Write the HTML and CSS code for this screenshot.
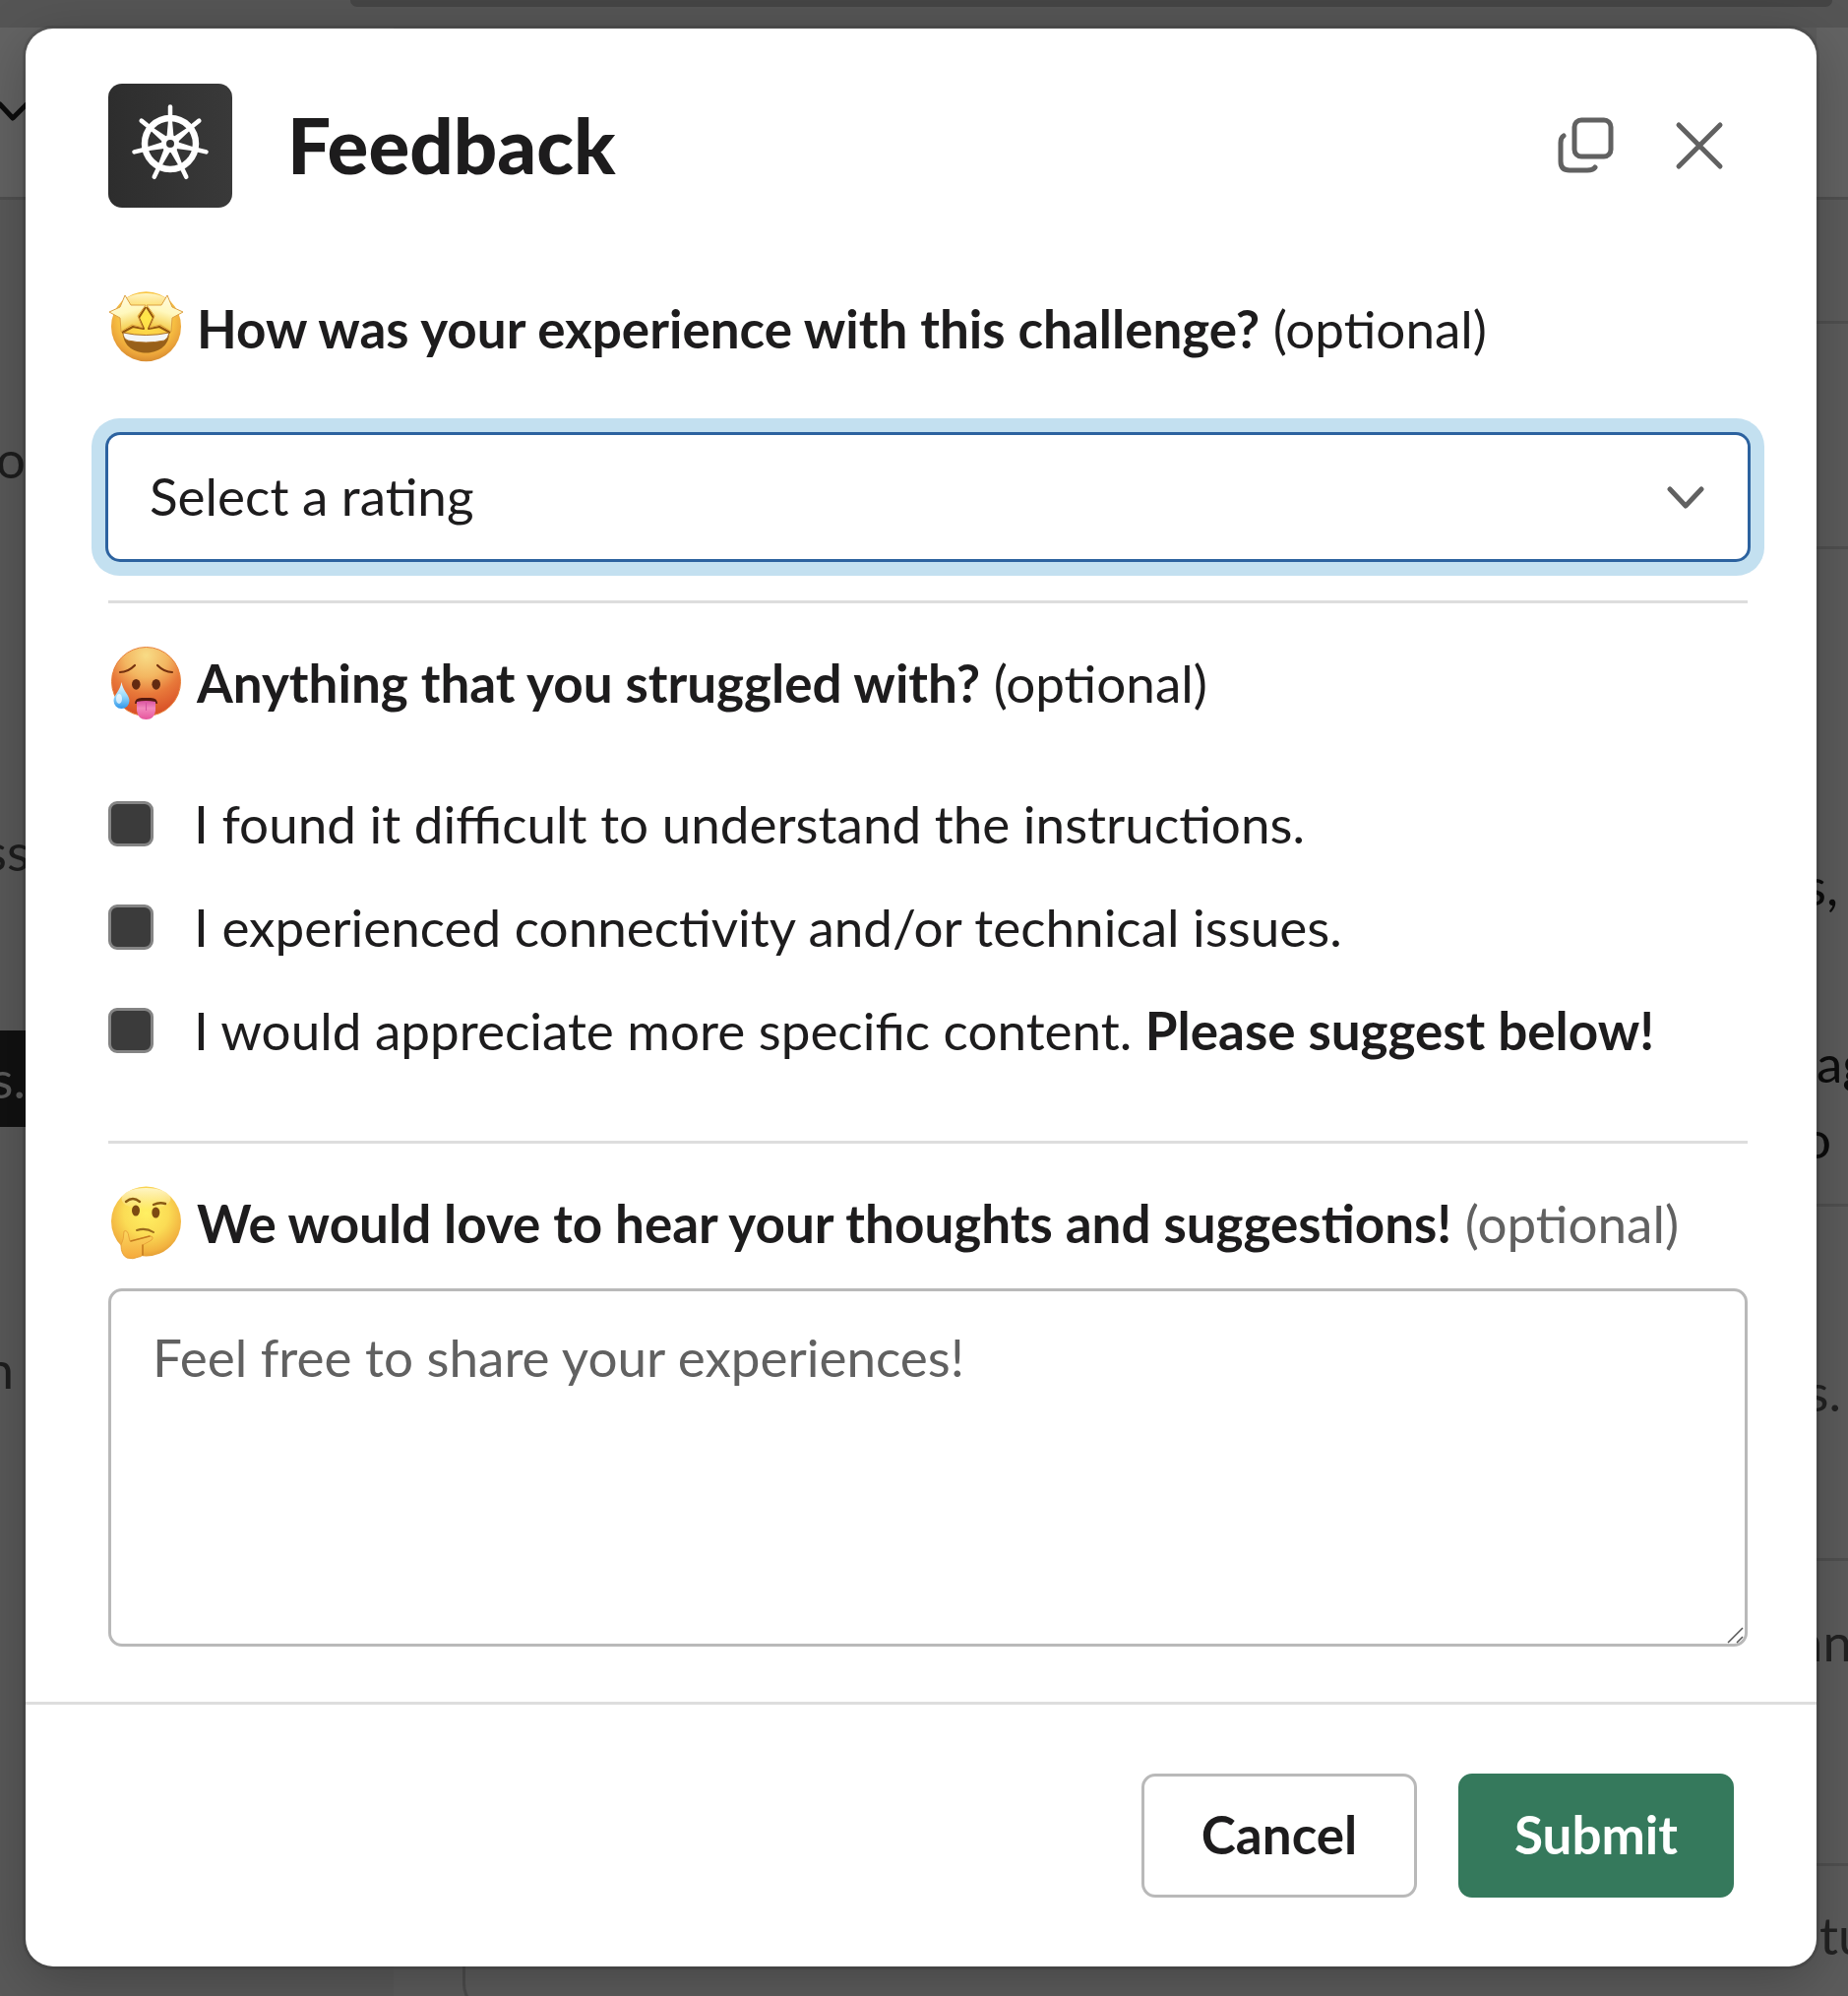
FILE: index.html
```html
<!DOCTYPE html>
<html lang="en">
<head>
<meta charset="utf-8">
<title>Feedback</title>
<meta name="viewport" content="width=device-width, initial-scale=1">
<link rel="stylesheet" href="styles.css">
</head>
<body>
<div class="workspace" aria-hidden="true">
  <div class="topbar"><div class="searchbar"></div></div>
  <div class="panes">
    <div class="sidebar">
      <div class="pane-head">
        <svg class="head-chevron" width="26" height="24" viewBox="0 0 26 24"><path d="M0 4 L13 18 L27 4" fill="none" stroke="#0c0c0c" stroke-width="5" stroke-linecap="round" stroke-linejoin="round"/></svg>
      </div>
      <div class="sidebar-list">
        <p class="peek peek-first">o</p>
        <p class="peek peek-second">ss</p>
        <p class="peek peek-active">s.</p>
        <p class="peek peek-last">n</p>
      </div>
    </div>
    <div class="main">
      <div class="channel"><div class="composer"></div></div>
      <div class="details">
        <div class="pane-head"></div>
        <div class="section section-tabs"></div>
        <div class="section section-title"></div>
        <div class="section section-about"><p class="peek">s,</p><p class="peek peek-start">ag</p><p class="peek peek-o">o</p></div>
        <div class="section section-tips"><p class="peek muted peek-dot">s.</p></div>
        <div class="section section-more"><p class="peek muted peek-edge">an</p></div>
        <div class="section section-end"><p class="peek muted peek-start">tu</p></div>
      </div>
    </div>
  </div>
</div>

<form class="modal" role="dialog" aria-labelledby="dialog-title">
  <header class="modal-header">
    <svg class="app-logo" viewBox="0 0 126 126" aria-hidden="true">
      <defs>
        <linearGradient id="tile"><stop offset="0" stop-color="#2d2d2d"/><stop offset="1" stop-color="#393939"/></linearGradient>
        <g id="spoke"><path d="M61.2 35 L59.500 54 H66.500 L64.8 35 Z" fill="#fff"/><path d="M63 36 V23.500" stroke="#fff" stroke-width="4.500" stroke-linecap="round"/></g>
      </defs>
      <rect width="126" height="126" rx="14" fill="url(#tile)"/>
      <circle cx="63" cy="61" r="26" fill="none" stroke="#fff" stroke-width="6.500"/>
      <use href="#spoke"/>
      <use href="#spoke" transform="rotate(51.43 63 61)"/>
      <use href="#spoke" transform="rotate(102.86 63 61)"/>
      <use href="#spoke" transform="rotate(154.29 63 61)"/>
      <use href="#spoke" transform="rotate(205.71 63 61)"/>
      <use href="#spoke" transform="rotate(257.14 63 61)"/>
      <use href="#spoke" transform="rotate(308.57 63 61)"/>
      <circle cx="63" cy="61" r="6.500" fill="#333" stroke="#fff" stroke-width="5"/>
    </svg>
    <h1 class="title" id="dialog-title">Feedback</h1>
    <div class="window-actions">
      <button class="icon-button" type="button" aria-label="Open in new window">
        <svg width="70" height="70" viewBox="0 0 70 70" fill="none" stroke="#616161" stroke-width="5" stroke-linecap="round"><rect x="23" y="9" width="37" height="37" rx="7"/><path d="M12 25 Q9 27 9 32 V51 Q9 60 18 60 H36 Q42 60 44 57"/></svg>
      </button>
      <button class="icon-button" type="button" aria-label="Close">
        <svg width="70" height="70" viewBox="0 0 70 70" fill="none" stroke="#616161" stroke-width="5" stroke-linecap="round"><path d="M14 14 L56 56 M56 14 L14 56"/></svg>
      </button>
    </div>
  </header>

  <div class="modal-body">
    <section class="question">
      <label class="prompt" for="rating">
        <svg class="emoji" viewBox="0 0 77 77" aria-hidden="true">
          <defs>
            <radialGradient id="starFace" cx=".5" cy=".38" r=".63"><stop offset="0" stop-color="#ffe84a"/><stop offset=".55" stop-color="#fbca45"/><stop offset=".85" stop-color="#eba43a"/><stop offset="1" stop-color="#d68a30"/></radialGradient>
            <linearGradient id="shine" x2="0" y2="1"><stop offset="0" stop-color="#fff6c5"/><stop offset="1" stop-color="#fff6c5" stop-opacity="0"/></linearGradient>
            <linearGradient id="star" x1=".4" x2=".7" y2="1"><stop offset="0" stop-color="#fffbe0"/><stop offset=".45" stop-color="#fff8bd"/><stop offset="1" stop-color="#f2c22e"/></linearGradient>
          </defs>
          <circle cx="38.500" cy="36.700" r="35.500" fill="url(#starFace)"/>
          <ellipse cx="38.500" cy="13" rx="23" ry="10" fill="url(#shine)"/>
          <g fill="url(#star)" stroke-linejoin="round">
            <g id="starEye">
              <path d="M38 17 L31 28 L36 39 L25 37 L14 43" fill="none" stroke="#91540e" stroke-width="2"/>
              <path d="M17 5 L23 15 L38 15 L30 26 L35 38 L24 35 L13 42 L12 28 L1 22 L12 17 Z" stroke="#dda043" stroke-width="1"/>
            </g>
            <use href="#starEye" transform="translate(77 0) scale(-1 1)"/>
          </g>
          <path d="M15 44 C16 70 61 70 62 44 Q38 50 15 44 Z" fill="#986019"/>
          <path d="M15 43 Q38 48 62 43 Q61 49 57 51 Q38 55 20 51 Q15 49 15 43 Z" fill="#f4f5f7" stroke="#a96e25" stroke-width="1"/>
        </svg>
        <span class="prompt-text"><strong>How was your experience with this challenge?</strong> (optional)</span>
      </label>
      <div class="select-wrap">
        <select class="select" id="rating"><option>Select a rating</option></select>
        <svg class="select-chevron" width="42" height="42" viewBox="0 0 42 42" aria-hidden="true"><path d="M5 13 L21 30 L37 13" fill="none" stroke="#616161" stroke-width="5" stroke-linecap="round" stroke-linejoin="round"/></svg>
      </div>
    </section>

    <hr class="divider">

    <fieldset class="question struggles">
      <legend class="prompt">
        <svg class="emoji" viewBox="0 0 77 77" aria-hidden="true">
          <defs>
            <radialGradient id="hotFace" cx=".5" cy=".12" r=".9"><stop offset="0" stop-color="#f8dc86"/><stop offset=".35" stop-color="#f3b661"/><stop offset=".62" stop-color="#e8793a"/><stop offset="1" stop-color="#d64a24"/></radialGradient>
            <linearGradient id="drop" x2="0" y2="1"><stop offset="0" stop-color="#eef9ff"/><stop offset=".5" stop-color="#9ddcfa"/><stop offset="1" stop-color="#2f96ea"/></linearGradient>
            <linearGradient id="tongue" x2="0" y2="1"><stop offset="0" stop-color="#d9529f"/><stop offset=".4" stop-color="#f289bd"/><stop offset="1" stop-color="#e6559c"/></linearGradient>
          </defs>
          <circle cx="38.500" cy="37.500" r="35" fill="url(#hotFace)" stroke="#e8813a" stroke-width="1"/>
          <path d="M12 28 Q20 28 27 21 M50 21 Q57 28 65 28" fill="none" stroke="#75310f" stroke-width="2.200" stroke-linecap="round"/>
          <ellipse cx="28.300" cy="40.300" rx="4.300" ry="5.400" fill="#632a11"/><ellipse cx="48.700" cy="40.300" rx="4.300" ry="5.400" fill="#632a11"/>
          <path d="M27 60 Q27 54 34 54 H43 Q50 54 50 60 Q38 57 27 60 Z" fill="#55190e"/>
          <path d="M29 58 Q38 56 48 58 V67 Q47 76 38.500 76 Q30 76 29 67 Z" fill="url(#tongue)"/>
          <path d="M38.500 59 V67" stroke="#d452a0" stroke-width="1"/>
          <path d="M13.500 38 C15 47 21.500 51 21.500 57 A8 8 0 0 1 5.500 57 C5.500 51 12 47 13.500 38 Z" fill="url(#drop)"/>
          <ellipse cx="11" cy="55" rx="3" ry="5" fill="#fff" opacity=".7"/>
        </svg>
        <span class="prompt-text"><strong>Anything that you struggled with?</strong> (optional)</span>
      </legend>
      <div class="options">
        <label class="option"><input class="checkbox" type="checkbox"><span>I found it difficult to understand the instructions.</span></label>
        <label class="option"><input class="checkbox" type="checkbox"><span>I experienced connectivity and/or technical issues.</span></label>
        <label class="option"><input class="checkbox" type="checkbox"><span>I would appreciate more specific content. <strong>Please suggest below!</strong></span></label>
      </div>
    </fieldset>

    <hr class="divider">

    <section class="question">
      <label class="prompt" for="thoughts">
        <svg class="emoji" viewBox="0 0 77 77" aria-hidden="true">
          <defs>
            <radialGradient id="thinkFace" cx=".5" cy=".38" r=".64"><stop offset="0" stop-color="#fff063"/><stop offset=".5" stop-color="#fbdc55"/><stop offset=".85" stop-color="#f2b340"/><stop offset="1" stop-color="#e29a33"/></radialGradient>
            <linearGradient id="hand" x2="0" y2="1"><stop offset="0" stop-color="#fbd75e"/><stop offset="1" stop-color="#f5a93c"/></linearGradient>
          </defs>
          <circle cx="38.500" cy="37" r="35.500" fill="url(#thinkFace)"/>
          <ellipse cx="38.500" cy="14" rx="25" ry="11" fill="url(#shine)"/>
          <path d="M18 17 Q25 11 32 17 M46 20 Q52 17 58 19" fill="none" stroke="#8a5b14" stroke-width="2.400" stroke-linecap="round"/>
          <ellipse cx="28" cy="26" rx="4" ry="5.500" fill="#7d4b12"/><ellipse cx="48.300" cy="28" rx="4" ry="5.500" fill="#7d4b12"/>
          <path d="M29 46 Q38 43 46 48" fill="none" stroke="#9a6a1d" stroke-width="2" stroke-linecap="round"/>
          <path d="M16 47 Q20 45 21 53 L22 57 L42 52 Q47 52 44 56 L35 61 Q36 74 31 73 Q25 76 19 74 Q13 71 13 61 Q16 55 16 47 Z" fill="url(#hand)" stroke="#e9a43a" stroke-width="1"/>
          <path d="M23 57 L42 52 M35 61 V71" fill="none" stroke="#c57c20" stroke-width="1.500" stroke-linecap="round"/>
        </svg>
        <span class="prompt-text"><strong>We would love to hear your thoughts and suggestions!</strong> <span class="hint">(optional)</span></span>
      </label>
      <div class="textarea-wrap">
        <textarea class="textarea" id="thoughts" placeholder="Feel free to share your experiences!"></textarea>
        <svg class="grip" width="18" height="18" viewBox="0 0 18 18" aria-hidden="true"><path d="M1 17 L16 2 M10 17 L16 11" fill="none" stroke="#555" stroke-width="1.500"/></svg>
      </div>
    </section>
  </div>

  <footer class="modal-footer">
    <button class="button button-outline" type="button">Cancel</button>
    <button class="button button-primary" type="submit">Submit</button>
  </footer>
</form>
</body>
</html>
```
FILE: styles.css
```css
* {
  box-sizing: border-box;
}

body {
  position: relative;
  margin: 0;
  padding: 29px 32px 30px 26px;
  background: #5c5c5c;
  color: #1d1c1d;
  font-family: Lato, sans-serif;
  font-size: 53px;
  line-height: 77px;
}

p,
h1 {
  margin: 0;
}

/* Dimmed workspace behind the dialog */
.workspace {
  position: absolute;
  inset: 0;
  display: flex;
  flex-direction: column;
  overflow: hidden;
}

.topbar {
  flex: none;
  height: 28px;
  padding: 0 16px 0 356px;
  background: #555;
}

.searchbar {
  height: 7px;
  background: #454545;
  border-radius: 0 0 18px 18px;
}

.panes {
  flex: 1;
  display: flex;
  min-height: 0;
}

.sidebar {
  flex: none;
  width: 400px;
  background: #595959;
}

.pane-head {
  height: 175px;
  padding-top: 74px;
  background: #636363;
  border-bottom: 3px solid #505050;
}

.head-chevron {
  display: block;
}

.sidebar-list {
  display: flex;
  flex-direction: column;
  width: 26px;
}

.peek {
  display: flex;
  justify-content: flex-end;
  color: #0c0c0c;
}

.peek-first {
  margin-top: 224px;
  color: #1d1d1d;
}

.peek-second {
  margin: 322px -4px 0 0;
  color: #1d1d1d;
}

.peek-active {
  margin-top: 144px;
  background: #111;
  color: #5c5c5c;
  line-height: 98px;
}

.peek-last {
  margin-top: 207px;
  padding-right: 12px;
  color: #1d1d1d;
}

.main {
  flex: 1;
  display: flex;
  min-width: 0;
}

.channel {
  flex: 1;
  display: flex;
  align-items: flex-end;
  padding-left: 70px;
}

.composer {
  flex: 1;
  height: 160px;
  margin-bottom: -16px;
  border: 3px solid #4c4c4c;
  border-right: 0;
  border-radius: 28px 0 0 28px;
}

.details {
  flex: none;
  width: 32px;
}

.section {
  overflow: hidden;
  border-bottom: 3px solid #505050;
}

.section-tabs {
  height: 126px;
}

.section-title {
  height: 229px;
}

.section-about {
  height: 668px;
  padding-top: 303px;
}

.section-about .peek:first-child {
  padding-right: 10px;
  margin-bottom: 103px;
}

.peek-o {
  padding-right: 17px;
}

.peek-start {
  justify-content: flex-start;
}

.section-tips {
  height: 360px;
  padding-top: 149px;
}

.peek-dot {
  padding-right: 7px;
}

.section-more {
  height: 310px;
  padding-top: 43px;
}

.peek-edge {
  margin-right: -4px;
}

.section-end {
  padding: 31px 0 0 3px;
  border-bottom: 0;
}

.muted {
  color: #222;
}

/* Dialog */
.modal {
  position: relative;
  background: #fff;
  border-radius: 28px;
  box-shadow: 0 0 0 3px rgba(30, 30, 30, .15), 0 14px 56px rgba(0, 0, 0, .25);
}

.modal-header {
  display: flex;
  align-items: center;
  padding: 56px 84px 0;
}

.app-logo {
  flex: none;
  width: 126px;
  height: 126px;
}

.title {
  flex: 1;
  margin-left: 56px;
  padding-bottom: 2px;
  font-size: 78px;
  font-weight: 900;
  line-height: 92px;
}

.window-actions {
  display: flex;
  gap: 45px;
}

.icon-button {
  display: block;
  width: 70px;
  height: 70px;
  padding: 0;
  border: 0;
  background: none;
}

.icon-button svg {
  display: block;
}

.modal-body {
  padding: 84px 70px 56px 84px;
}

.question {
  margin: 0;
  padding: 0;
  border: 0;
}

.prompt {
  display: flex;
  gap: 13px;
  padding: 0;
}

.emoji {
  flex: none;
  width: 77px;
  height: 77px;
}

strong {
  font-weight: 700;
}

.select-wrap {
  display: grid;
  align-items: center;
  margin-top: 70px;
}

.select {
  grid-area: 1 / 1;
  width: 100%;
  height: 126px;
  padding: 0 84px 4px 42px;
  appearance: none;
  border: 0;
  border-radius: 12px;
  outline: 0;
  background: #fff;
  box-shadow: 0 0 0 3px #2c629f, 0 0 0 17px #c3e0f0;
  color: inherit;
  font: inherit;
}

.select-chevron {
  grid-area: 1 / 1;
  justify-self: end;
  margin-right: 42px;
  pointer-events: none;
}

.divider {
  height: 3px;
  margin: 42px 0;
  border: 0;
  background: #ddd;
}

.options {
  display: flex;
  flex-direction: column;
  gap: 28px;
  padding: 66px 0 32px;
}

.option {
  display: flex;
  align-items: center;
  gap: 41px;
}

.checkbox {
  flex: none;
  width: 46px;
  height: 46px;
  margin: 0;
  appearance: none;
  border: 3px solid #848484;
  border-radius: 9px;
  background: #3b3b3b;
}

.hint {
  color: #616161;
}

.textarea-wrap {
  display: grid;
  margin-top: 28px;
}

.textarea {
  grid-area: 1 / 1;
  width: 100%;
  height: 364px;
  padding: 28px 42px;
  border: 3px solid #b9b9b9;
  border-radius: 14px;
  background: #fff;
  color: inherit;
  font: inherit;
  resize: none;
}

.textarea::placeholder {
  color: #616161;
}

.grip {
  grid-area: 1 / 1;
  place-self: end;
  margin: 3px;
  pointer-events: none;
}

.modal-footer {
  display: flex;
  justify-content: flex-end;
  gap: 42px;
  padding: 70px 84px;
  border-top: 3px solid #ddd;
}

.button {
  width: 280px;
  height: 126px;
  padding: 0 0 4px;
  border: 3px solid #b9b9b9;
  border-radius: 14px;
  font: inherit;
  font-weight: 700;
}

.button-outline {
  background: #fff;
  color: #1d1c1d;
}

.button-primary {
  border-color: #35795c;
  background: #35795c;
  color: #fff;
}
```
